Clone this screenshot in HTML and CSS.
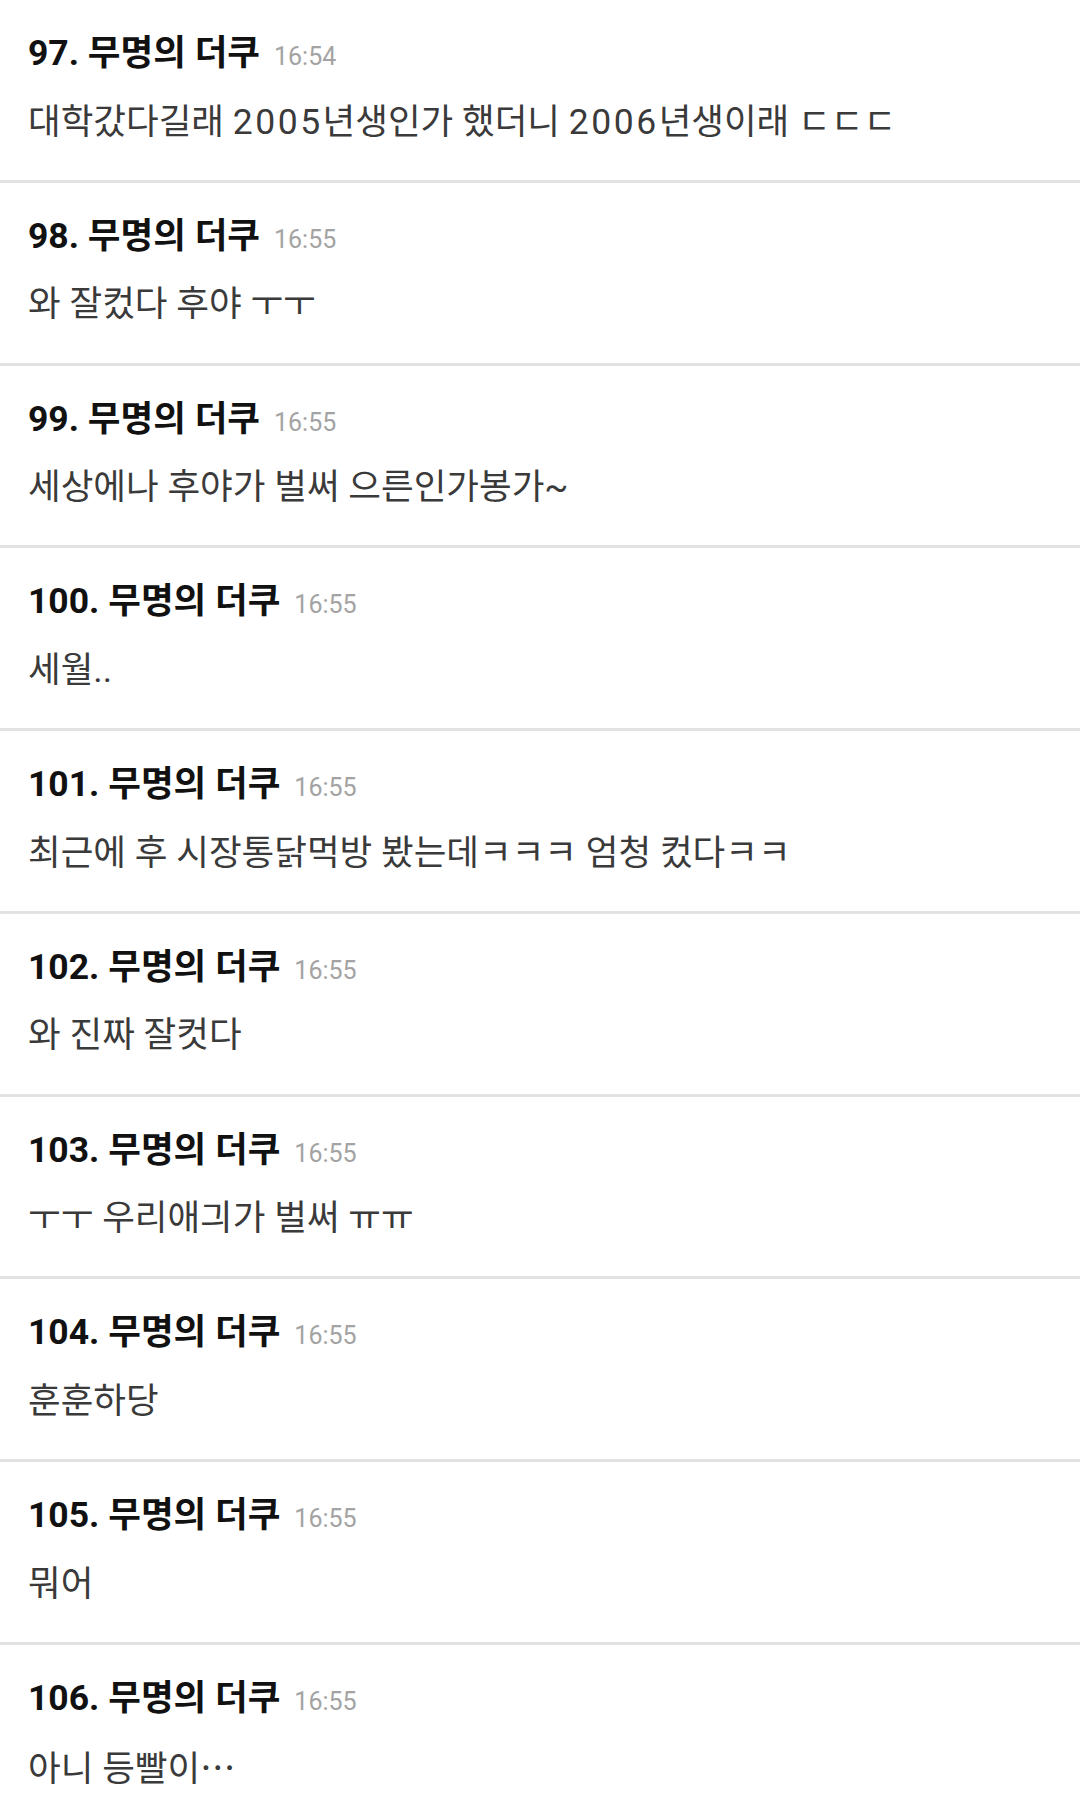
FILE: index.html
```html
<!DOCTYPE html>
<html lang="ko">
<head>
<meta charset="utf-8">
<link rel="stylesheet" href="styles.css">
</head>
<body>
<ul class="list">
  <li class="item"><div class="head"><span class="name">97. 무명의 더쿠</span><span class="time">16:54</span></div><div class="body">대학갔다길래 <span class="digits">2005</span>년생인가 했더니 <span class="digits">2006</span>년생이래 ㄷㄷㄷ</div></li>
  <li class="item"><div class="head"><span class="name">98. 무명의 더쿠</span><span class="time">16:55</span></div><div class="body">와 잘컸다 후야 ㅜㅜ</div></li>
  <li class="item"><div class="head"><span class="name">99. 무명의 더쿠</span><span class="time">16:55</span></div><div class="body">세상에나 후야가 벌써 으른인가봉가~</div></li>
  <li class="item"><div class="head"><span class="name">100. 무명의 더쿠</span><span class="time">16:55</span></div><div class="body">세월..</div></li>
  <li class="item"><div class="head"><span class="name">101. 무명의 더쿠</span><span class="time">16:55</span></div><div class="body">최근에 후 시장통닭먹방 봤는데ㅋㅋㅋ 엄청 컸다ㅋㅋ</div></li>
  <li class="item"><div class="head"><span class="name">102. 무명의 더쿠</span><span class="time">16:55</span></div><div class="body">와 진짜 잘컷다</div></li>
  <li class="item"><div class="head"><span class="name">103. 무명의 더쿠</span><span class="time">16:55</span></div><div class="body">ㅜㅜ 우리애긔가 벌써 ㅠㅠ</div></li>
  <li class="item"><div class="head"><span class="name">104. 무명의 더쿠</span><span class="time">16:55</span></div><div class="body">훈훈하당</div></li>
  <li class="item"><div class="head"><span class="name">105. 무명의 더쿠</span><span class="time">16:55</span></div><div class="body">뭐어</div></li>
  <li class="item"><div class="head"><span class="name">106. 무명의 더쿠</span><span class="time">16:55</span></div><div class="body">아니 등빨이<span class="ell">…</span></div></li>
</ul>
</body>
</html>
```
FILE: styles.css
```css
html, body {
  margin: 0;
  padding: 0;
  background: #ffffff;
}
body {
  font-family: Roboto, "Noto Sans CJK KR", sans-serif;
  width: 1080px;
  overflow: hidden;
}
.list {
  list-style: none;
  margin: 0;
  padding: 0;
}
.item {
  box-sizing: border-box;
  height: 182.75px;
  padding: 29px 28px 0 28px;
  border-bottom: 3px solid #e2e2e2;
}
.head {
  display: flex;
  align-items: baseline;
  line-height: 48px;
  white-space: nowrap;
}
.name {
  font-size: 35.5px;
  font-weight: 700;
  color: #111111;
}
.time {
  font-size: 25px;
  color: #a3a3a3;
  margin-left: 14px;
}
.body {
  margin-top: 16.5px;
  font-size: 35.5px;
  line-height: 48px;
  color: #3a3a3a;
  white-space: nowrap;
}
.digits {
  letter-spacing: 2.5px;
}
.ell {
  font-family: "Noto Sans CJK JP", sans-serif;
}
```
